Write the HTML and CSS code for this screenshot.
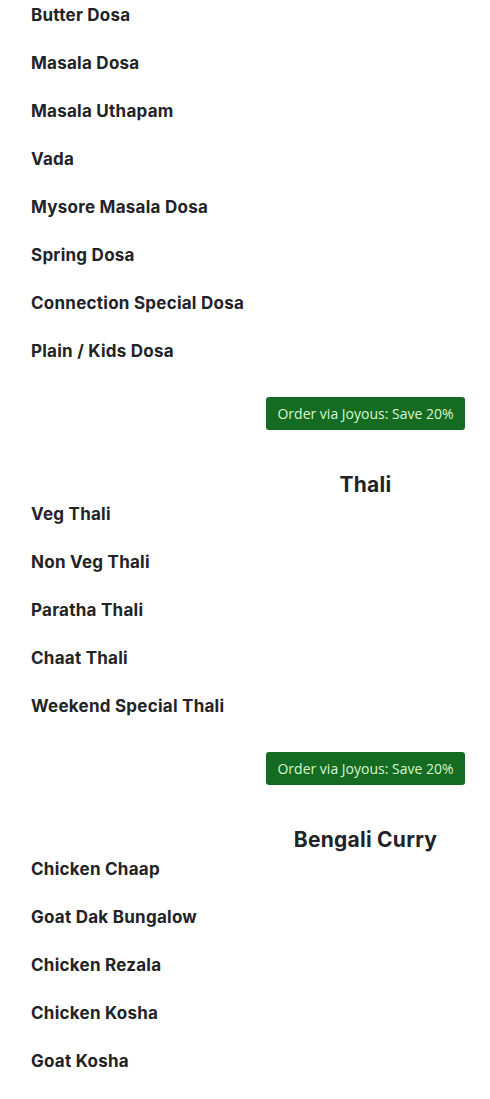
FILE: index.html
```html
<!DOCTYPE html>
<html lang="en">
<head>
<meta charset="utf-8">
<title>Menu</title>
<link rel="stylesheet" href="styles.css">
</head>
<body>
<main class="menu">
  <section class="section">
    <ul class="items">
      <li class="item">Butter Dosa</li>
      <li class="item">Masala Dosa</li>
      <li class="item">Masala Uthapam</li>
      <li class="item">Vada</li>
      <li class="item">Mysore Masala Dosa</li>
      <li class="item">Spring Dosa</li>
      <li class="item">Connection Special Dosa</li>
      <li class="item">Plain / Kids Dosa</li>
    </ul>
    <div class="order-row"><a class="order-btn" href="#">Order via Joyous: Save 20%</a></div>
  </section>
  <section class="section">
    <div class="heading-row"><h2 class="heading">Thali</h2></div>
    <ul class="items">
      <li class="item">Veg Thali</li>
      <li class="item">Non Veg Thali</li>
      <li class="item">Paratha Thali</li>
      <li class="item">Chaat Thali</li>
      <li class="item">Weekend Special Thali</li>
    </ul>
    <div class="order-row"><a class="order-btn" href="#">Order via Joyous: Save 20%</a></div>
  </section>
  <section class="section">
    <div class="heading-row"><h2 class="heading">Bengali Curry</h2></div>
    <ul class="items">
      <li class="item">Chicken Chaap</li>
      <li class="item">Goat Dak Bungalow</li>
      <li class="item">Chicken Rezala</li>
      <li class="item">Chicken Kosha</li>
      <li class="item">Goat Kosha</li>
    </ul>
  </section>
</main>
</body>
</html>
```

FILE: styles.css
```css
html, body {
  margin: 0;
  padding: 0;
  background: #ffffff;
}
body {
  font-family: Inter, "Liberation Sans", sans-serif;
  color: #222326;
}
.menu {
  padding: 3px 25px 0 31px;
}
.section {
  display: flex;
  flex-direction: column;
}
.items {
  list-style: none;
  margin: 0;
  padding: 0;
}
.item {
  font-size: 17px;
  font-weight: 700;
  line-height: 24px;
  margin-bottom: 24px;
  letter-spacing: 0.25px;
}
.order-row {
  display: flex;
  justify-content: flex-end;
  margin-top: 10px;
}
.order-btn {
  display: inline-flex;
  align-items: center;
  justify-content: center;
  width: 199px;
  height: 33px;
  box-sizing: border-box;
  background: #156b22;
  color: #d6f7d2;
  border-radius: 3px;
  font-family: "Open Sans", sans-serif;
  font-size: 14px;
  text-decoration: none;
}
.heading-row {
  display: flex;
  justify-content: flex-end;
  margin-top: 43px;
  margin-bottom: 5px;
}
.heading {
  width: 199px;
  margin: 0;
  text-align: center;
  font-size: 21px;
  font-weight: 700;
  line-height: 24px;
  letter-spacing: 0.25px;
}
```
